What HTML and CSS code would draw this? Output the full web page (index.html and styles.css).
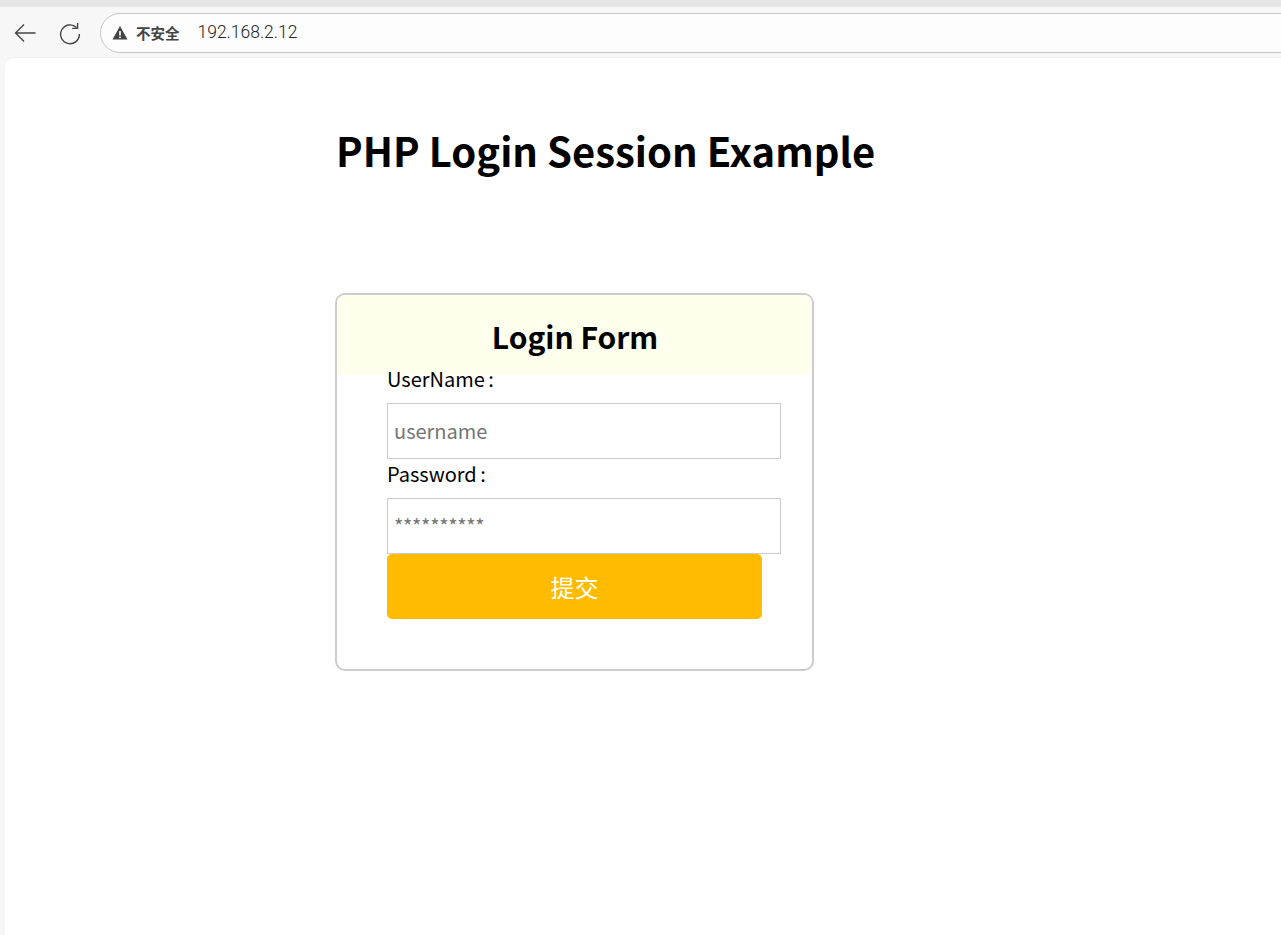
FILE: index.html
```html
<!DOCTYPE html>
<html lang="zh-CN">
<head>
    <meta charset="UTF-8">
    <meta name="viewport" content="width=device-width, initial-scale=1.0">
    <title>PHP Login Session Example</title>
    <link rel="stylesheet" href="styles.css">
</head>
<body>

    <!-- Browser toolbar -->
    <div class="toolbar">
        <svg class="tool-icon back-icon" width="24" height="24" viewBox="0 0 24 24" fill="none" stroke="#444" stroke-width="1.3">
            <path d="M22.5 12H2.5M11 3.5 2.5 12l8.5 8.5"/>
        </svg>
        <svg class="tool-icon" width="24" height="24" viewBox="0 0 24 24" fill="none" stroke="#444" stroke-width="1.4">
            <path d="M18.6 6.6A9.4 9.4 0 1 0 21.4 13"/>
            <path d="M19.6 2v5.4h-5.4"/>
        </svg>
        <div class="address-bar">
            <svg class="warn-icon" width="16" height="16" viewBox="0 0 16 16">
                <path fill="#444" d="M8 1 15.5 14.5H.5zM7.2 6v4.5h1.6V6zm0 5.6v1.5h1.6v-1.5z" fill-rule="evenodd"/>
            </svg>
            <span class="not-secure">不安全</span>
            <span class="url">192.168.2.12</span>
        </div>
    </div>

    <div class="page">
        <h1>PHP Login Session Example</h1>

        <div class="login-box">
            <h2>Login Form</h2>
            <form class="login-form">
                <label for="username">UserName :</label>
                <input type="text" id="username" name="username" placeholder="username">
                <label for="password">Password :</label>
                <input type="password" id="password" name="password" placeholder="**********">
                <button type="button">提交</button>
            </form>
        </div>
    </div>

</body>
</html>
```

FILE: styles.css
```css
html, body {
    height: 100%;
}
body {
    margin: 0;
    padding-top: 7px;
    box-sizing: border-box;
    background-color: #f7f7f7;
    font-family: "Noto Sans CJK SC", "Noto Sans", sans-serif;
    overflow: hidden;
}
body::before {
    content: "";
    display: block;
    height: 7px;
    margin-top: -7px;
    background-color: #e6e6e6;
}
.toolbar {
    display: flex;
    align-items: center;
    height: 51px;
    padding-left: 13px;
    box-sizing: border-box;
}
.tool-icon {
    margin-right: 22px;
    flex-shrink: 0;
}
.back-icon {
    margin-right: 21px;
}
.address-bar {
    display: flex;
    align-items: center;
    flex: 1;
    height: 40px;
    margin-left: -4px;
    margin-right: -30px;
    padding-left: 11px;
    box-sizing: border-box;
    background-color: #fdfdfd;
    border: 1px solid #c6c6c6;
    border-radius: 20px;
}
.warn-icon {
    margin-right: 8px;
}
.not-secure {
    font-size: 14.5px;
    font-weight: bold;
    color: #444;
    margin-right: 18px;
}
.url {
    font-family: Roboto, "Noto Sans", sans-serif;
    font-size: 17.5px;
    font-weight: 300;
    color: #222;
    position: relative;
    top: -1px;
}
.page {
    height: 877px;
    margin-left: 5px;
    padding: 1px 0 0 330px;
    box-sizing: border-box;
    background-color: #fff;
    border-radius: 8px 0 0 0;
    box-shadow: 0 -1px 0 #eee;
}
h1 {
    margin: 61px 0 0;
    padding-left: 1px;
    font-size: 40px;
    line-height: 60px;
    font-weight: bold;
    color: #000;
}
.login-box {
    width: 479px;
    height: 378px;
    margin-top: 113px;
    box-sizing: border-box;
    border: 2px solid #ccc;
    border-radius: 10px;
    overflow: hidden;
}
h2 {
    margin: 0;
    height: 80px;
    padding-left: 1px;
    background-color: #ffffee;
    font-size: 30px;
    line-height: 82px;
    font-weight: bold;
    text-align: center;
}
.login-form {
    margin-top: -8px;
    padding-left: 50px;
}
label {
    display: block;
    font-size: 20px;
    line-height: 24px;
    color: #000;
    word-spacing: -1px;
}
input {
    display: block;
    width: 394px;
    height: 56px;
    margin: 12px 0 3px;
    padding: 0 6px 2px;
    box-sizing: border-box;
    border: 1px solid #ccc;
    font-family: "Noto Sans CJK SC", "Noto Sans", sans-serif;
    font-size: 20px;
    outline: none;
}
#password {
    margin-top: 12px;
    margin-bottom: 0;
}
#password::placeholder {
    letter-spacing: -0.3px;
}
input::placeholder {
    color: #757575;
}
button {
    display: block;
    width: 375px;
    height: 65px;
    background-color: #ffbb00;
    color: white;
    border: none;
    border-radius: 5px;
    font-family: "Noto Sans CJK SC", "Noto Sans", sans-serif;
    font-size: 24px;
    cursor: pointer;
}
```
